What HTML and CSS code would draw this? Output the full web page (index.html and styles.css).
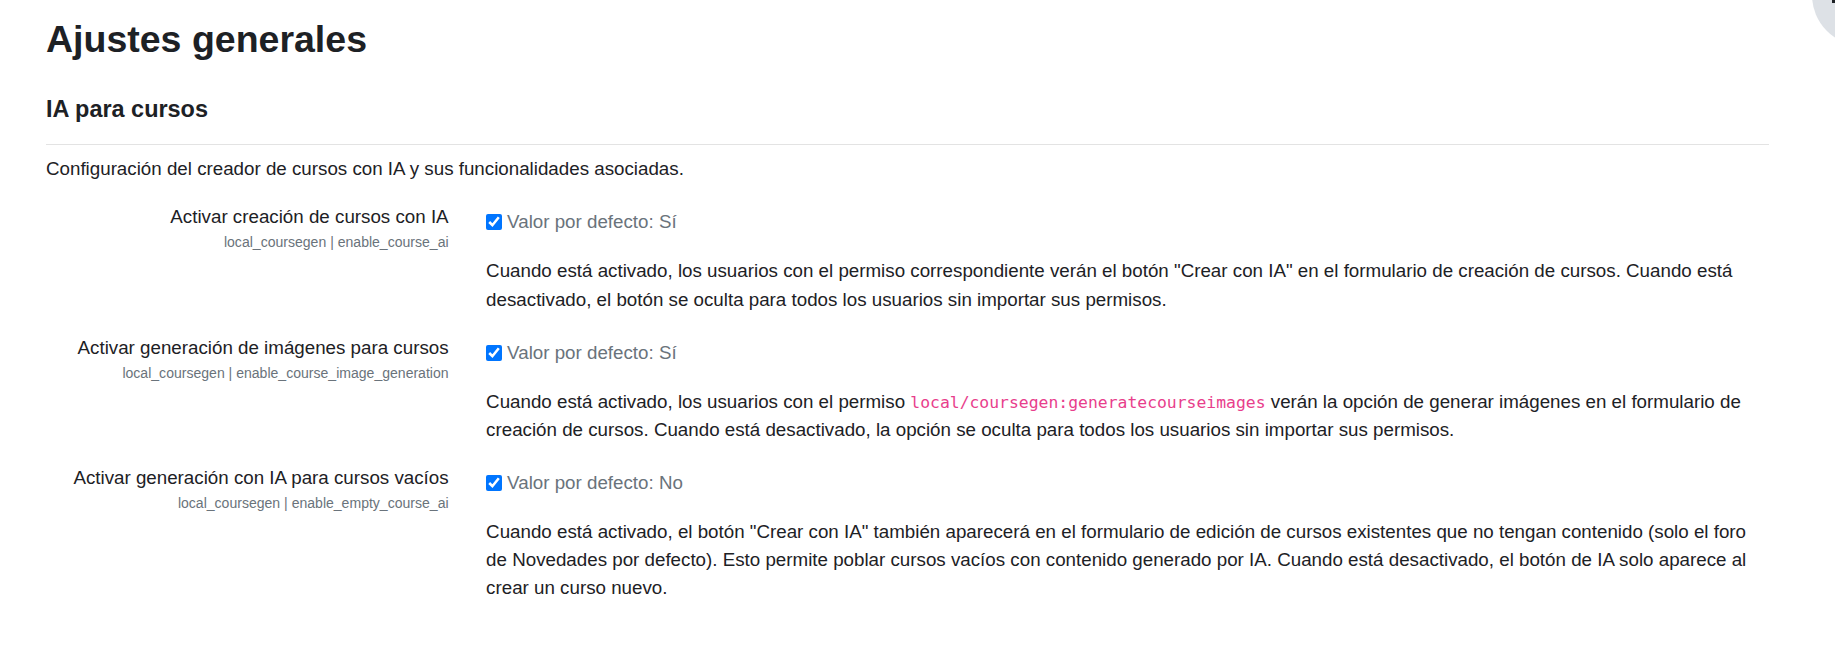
FILE: index.html
```html
<!DOCTYPE html>
<html lang="es">
<head>
<meta charset="utf-8">
<title>Ajustes generales</title>
<link rel="stylesheet" href="styles.css">
</head>
<body>
<div class="fab"><span class="fab-icon"></span></div>
<main class="page">
  <h2 class="title">Ajustes generales</h2>
  <h3 class="section">IA para cursos</h3>
  <div class="divider"></div>
  <p class="intro">Configuración del creador de cursos con IA y sus funcionalidades asociadas.</p>

  <div class="form-item">
    <div class="form-label">
      <label for="s1">Activar creación de cursos con IA</label>
      <span class="shortname">local_coursegen | enable_course_ai</span>
    </div>
    <div class="form-setting">
      <div class="checkline">
        <input type="checkbox" id="s1" checked>
        <span class="default">Valor por defecto: Sí</span>
      </div>
      <p class="desc">Cuando está activado, los usuarios con el permiso correspondiente verán el botón "Crear con IA" en el formulario de creación de cursos. Cuando está desactivado, el botón se oculta para todos los usuarios sin importar sus permisos.</p>
    </div>
  </div>

  <div class="form-item">
    <div class="form-label">
      <label for="s2">Activar generación de imágenes para cursos</label>
      <span class="shortname">local_coursegen | enable_course_image_generation</span>
    </div>
    <div class="form-setting">
      <div class="checkline">
        <input type="checkbox" id="s2" checked>
        <span class="default">Valor por defecto: Sí</span>
      </div>
      <p class="desc">Cuando está activado, los usuarios con el permiso <code>local/coursegen:generatecourseimages</code> verán la opción de generar imágenes en el formulario de creación de cursos. Cuando está desactivado, la opción se oculta para todos los usuarios sin importar sus permisos.</p>
    </div>
  </div>

  <div class="form-item">
    <div class="form-label">
      <label for="s3">Activar generación con IA para cursos vacíos</label>
      <span class="shortname">local_coursegen | enable_empty_course_ai</span>
    </div>
    <div class="form-setting">
      <div class="checkline">
        <input type="checkbox" id="s3" checked>
        <span class="default">Valor por defecto: No</span>
      </div>
      <p class="desc">Cuando está activado, el botón "Crear con IA" también aparecerá en el formulario de edición de cursos existentes que no tengan contenido (solo el foro de Novedades por defecto). Esto permite poblar cursos vacíos con contenido generado por IA. Cuando está desactivado, el botón de IA solo aparece al crear un curso nuevo.</p>
    </div>
  </div>
</main>
</body>
</html>
```

FILE: styles.css
```css
html, body {
  margin: 0;
  padding: 0;
  background: #ffffff;
}

body {
  font-family: "Liberation Sans", Arial, sans-serif;
  font-size: 18.75px;
  line-height: 1.5;
  color: #1d2125;
  overflow: hidden;
}

.page {
  padding: 17px 66px 0 46px;
}

.title {
  margin: 0 0 33px;
  font-size: 37.5px;
  line-height: 1.2;
  font-weight: 700;
}

.section {
  margin: 0 0 21px;
  font-size: 23.44px;
  line-height: 1.2;
  font-weight: 700;
}

.divider {
  height: 0;
  border-top: 1px solid #e3e3e3;
}

.intro {
  margin: 10px 0 20px;
}

.form-item {
  display: grid;
  grid-template-columns: 402.6px 1fr;
  column-gap: 37.5px;
  margin-bottom: 20px;
}

.form-label {
  text-align: right;
}

.form-label label {
  display: block;
}

.shortname {
  display: block;
  font-size: 14.06px;
  line-height: 1.6;
  color: #6a737b;
}

.checkline {
  display: flex;
  align-items: center;
  gap: 5px;
  padding-top: 5px;
}

.checkline input {
  width: 16px;
  height: 16px;
  margin: 0;
  flex: none;
}

.default {
  color: #6a737b;
}

.desc {
  margin: 21px 0 0;
}

code {
  font-family: "DejaVu Sans Mono", "Liberation Mono", monospace;
  font-size: 87.5%;
  line-height: 1;
  color: #e83e8c;
}

.fab {
  position: absolute;
  left: 1812px;
  top: -56px;
  width: 102px;
  height: 102px;
  border-radius: 50%;
  background: #dde1e6;
}

.fab-icon {
  position: absolute;
  left: 20px;
  top: 56px;
  width: 3px;
  height: 3px;
  background: #1d2125;
}
```
